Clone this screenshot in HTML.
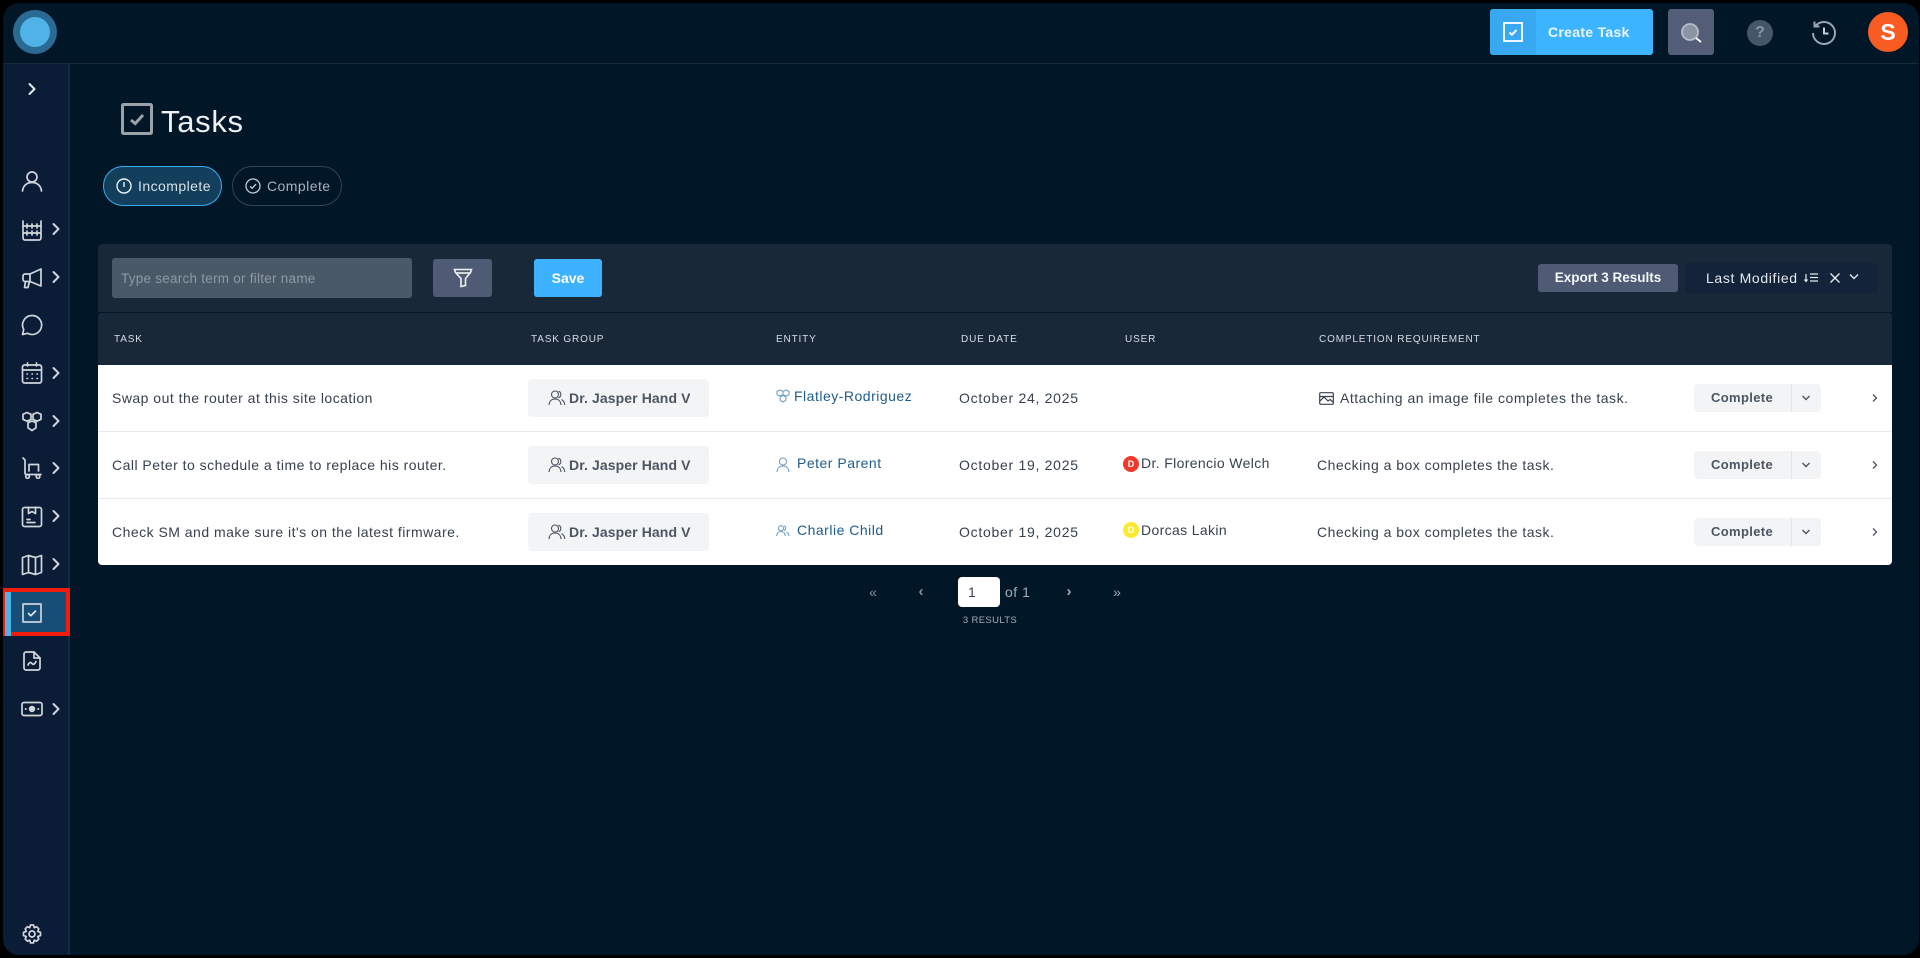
<!DOCTYPE html>
<html lang="en"><head><meta charset="utf-8"><title>Tasks</title>
<style>
*{box-sizing:border-box;margin:0;padding:0}
html,body{width:1920px;height:958px;background:#000;overflow:hidden;font-family:"Liberation Sans",sans-serif}
.a{position:absolute}
.t{position:absolute;white-space:nowrap;line-height:20px;height:20px}
#app{position:absolute;left:3px;top:3px;width:1916px;height:952px;border-radius:16px;background:#011627;overflow:hidden}
#root{position:absolute;left:-3px;top:-3px;width:1920px;height:958px}
.ic{position:absolute;fill:none;stroke:#d1d5db;stroke-width:1.7;stroke-linecap:round;stroke-linejoin:round}
.th{font-size:10px;letter-spacing:.85px;color:#d8dde3;top:330px}
.td{font-size:14px;color:#374151;letter-spacing:.48px}
.chip{position:absolute;left:528px;width:181px;height:38px;background:#f3f4f6;border-radius:4px}
.chipt{font-size:14px;font-weight:700;color:#4b5563;left:569px;letter-spacing:.1px}
.ln{font-size:14px;color:#1f5c8c;letter-spacing:.5px}
.cb{position:absolute;left:1694px;width:127px;height:28px;background:#f3f4f6;border-radius:4px}
.cbd{position:absolute;left:1791px;width:1px;height:28px;background:#e2e4e8}
.cbt{font-size:13px;font-weight:700;color:#4b5563;left:1711px;letter-spacing:.35px}
.rl{position:absolute;left:98px;width:1794px;height:1px;background:#e8eaed}
</style></head><body>
<div id="app"><div id="root">

<!-- sidebar -->
<div class="a" style="left:0;top:64px;width:68px;height:894px;background:#0a1c36"></div>
<div class="a" style="left:68px;top:64px;width:2px;height:894px;background:#13294a"></div>
<!-- header line -->
<div class="a" style="left:0;top:63px;width:1920px;height:1px;background:#122b3e"></div>

<!-- logo -->
<div class="a" style="left:13px;top:10px;width:44px;height:44px;border-radius:50%;background:#2a6a93"></div>
<div class="a" style="left:20px;top:17px;width:30px;height:30px;border-radius:50%;background:#4fb3e8"></div>

<!-- header right -->
<div class="a" style="left:1490px;top:9px;width:163px;height:46px;background:#3db4ff;border-radius:3px"></div>
<div class="a" style="left:1490px;top:9px;width:46px;height:46px;background:#38a8f0;border-radius:3px 0 0 3px"></div>
<svg class="a" style="left:1503px;top:22px" width="20" height="20" viewBox="0 0 20 20" fill="none" stroke="#fff"><rect x="1" y="1" width="18" height="18" stroke-width="1.8"/><path d="M6.5 10.5l2.4 2.2 4.6-4.6" stroke-width="2"/></svg>
<div class="t" style="left:1548px;top:22px;font-size:14px;font-weight:700;color:#eaf6ff;letter-spacing:.3px">Create Task</div>
<div class="a" style="left:1668px;top:9px;width:46px;height:46px;background:#535d78;border-radius:3px"></div>
<svg class="a" style="left:1680px;top:22px" width="24" height="22" viewBox="0 0 24 22" fill="none"><circle cx="10" cy="10" r="8" fill="#8b94a6" stroke="#b6bcc8" stroke-width="1.8"/><path d="M16 16l5 4" stroke="#fff" stroke-width="1.8"/></svg>
<div class="a" style="left:1747px;top:20px;width:26px;height:26px;border-radius:50%;background:#44566a"></div>
<div class="t" style="left:1747px;top:23px;width:26px;text-align:center;font-size:16px;font-weight:700;color:#8796a6">?</div>
<svg class="a" style="left:1810px;top:19px" width="28" height="28" viewBox="0 0 28 28" fill="none" stroke="#9aa5b1" stroke-width="2"><path d="M5.5 7A11 11 0 1 1 3 14"/><path d="M4.5 2.500v5h5"/><path d="M14 8.500v6h4.500" stroke="#c6ccd4"/></svg>
<div class="a" style="left:1868px;top:12px;width:40px;height:40px;border-radius:50%;background:#f95c22"></div>
<div class="t" style="left:1868px;top:22px;width:40px;text-align:center;font-size:23px;font-weight:700;color:#fff">S</div>

<!-- sidebar active -->
<div class="a" style="left:3px;top:588px;width:67px;height:48px;background:#164e78;border:4px solid #f01c0c"></div>
<div class="a" style="left:5px;top:592px;width:6px;height:44px;background:#4fb3e8"></div>

<!-- expand chevron -->
<svg class="ic" style="left:26px;top:82px" width="12" height="14" viewBox="0 0 12 14"><path d="M3.5 2l5 5-5 5" stroke="#e5e7eb" stroke-width="2"/></svg>
<!-- person -->
<svg class="ic" style="left:21px;top:170px" width="22" height="22" viewBox="0 0 22 22"><circle cx="11" cy="7" r="5"/><path d="M1.500 21c.5-5 4-8.500 9.500-8.500s9 3.500 9.500 8.500"/></svg>
<!-- abacus -->
<svg class="ic" style="left:21px;top:219px" width="22" height="22" viewBox="0 0 22 22"><path d="M2 2v17a2 2 0 0 0 2 2h14a2 2 0 0 0 2-2V2M2 7h18M2 14h18M6 5v4M11 5v4M16 5v4M6 12v4M11 12v4M16 12v4"/></svg>
<!-- megaphone -->
<svg class="ic" style="left:21px;top:267px" width="22" height="22" viewBox="0 0 22 22"><path d="M20 2v17l-11-4.500H4a2 2 0 0 1-2-2V9a2 2 0 0 1 2-2h5z"/><path d="M9 7v7.500M4.500 14.500l-1 6H7l1.500-6"/></svg>
<!-- chat -->
<svg class="ic" style="left:21px;top:314px" width="22" height="22" viewBox="0 0 22 22"><path d="M11 1.500a9.500 9.500 0 1 1-4.500 17.800L1.500 20.500l1.200-5A9.500 9.500 0 0 1 11 1.500z"/></svg>
<!-- calendar -->
<svg class="ic" style="left:21px;top:362px" width="22" height="22" viewBox="0 0 22 22"><rect x="1.500" y="3" width="19" height="18" rx="2"/><path d="M1.500 8h19M6.500 1v3M15.500 1v3"/><path d="M6 12h.5M11 12h.5M16 12h.5M6 16.500h.5M11 16.500h.5M16 16.500h.5" stroke-width="1.600"/></svg>
<!-- hexes -->
<svg class="ic" style="left:21px;top:410px" width="22" height="22" viewBox="0 0 22 22"><path d="M6 2.500l4 1.800v5L6 11.200 2 9.300v-5zM16 2.500l4 1.800v5l-4 1.900-4-1.900v-5zM11 11l4 1.800v5L11 20.500l-4-2.700v-5z"/></svg>
<!-- cart -->
<svg class="ic" style="left:21px;top:457px" width="22" height="22" viewBox="0 0 22 22"><path d="M2 1l2 2v13c0 1 .7 1.500 1.500 1.500H20"/><path d="M8 14V7.500h9.500V14"/><circle cx="6.500" cy="19.500" r="1.800"/><circle cx="17" cy="19.500" r="1.800"/></svg>
<!-- box -->
<svg class="ic" style="left:21px;top:506px" width="22" height="22" viewBox="0 0 22 22"><rect x="1.500" y="1.500" width="19" height="19" rx="2"/><path d="M7.500 1.500v6l3.500-2 3.500 2v-6M6 13.500h3M6 16.500h8"/></svg>
<!-- map -->
<svg class="ic" style="left:21px;top:554px" width="22" height="22" viewBox="0 0 22 22"><path d="M1.500 3.500l6-2 7 2 6-2v17l-6 2-7-2-6 2zM7.500 1.500v17M14.500 3.500v17"/></svg>
<!-- tasks -->
<svg class="ic" style="left:22px;top:603px" width="20" height="20" viewBox="0 0 20 20"><rect x="1" y="1" width="18" height="18" stroke="#cdd3da"/><path d="M6.500 10.500l2.400 2.200 4.600-4.600" stroke="#e5e7eb"/></svg>
<!-- report -->
<svg class="ic" style="left:22px;top:651px" width="20" height="20" viewBox="0 0 20 20"><path d="M2 3a2 2 0 0 1 2-2h8l6 6v10a2 2 0 0 1-2 2H4a2 2 0 0 1-2-2z"/><path d="M12 1v6h6M6 14c1.500-3 3-3 4-1.500s2.500 1 4-2"/></svg>
<!-- money -->
<svg class="ic" style="left:21px;top:701px" width="22" height="16" viewBox="0 0 22 16"><rect x="1" y="1.500" width="20" height="13" rx="2"/><circle cx="11" cy="8" r="2.400" fill="#d1d5db"/><path d="M4.500 8h.5M17 8h.5"/></svg>
<!-- gear -->
<svg class="ic" style="left:22px;top:924px" width="20" height="20" viewBox="0 0 20 20"><circle cx="10" cy="10" r="3"/><path d="M8.500 1h3l.7 2.700 2.400-1 2.200 2.200-1.100 2.500 2.800.9v3.300l-2.800.9 1.100 2.500-2.200 2.200-2.400-1-.7 2.700h-3l-.7-2.700-2.400 1-2.200-2.200 1.100-2.500L1.500 11.600V8.300l2.800-.9-1.100-2.500 2.200-2.200 2.400 1z"/></svg>
<!-- sidebar chevrons -->
<svg class="ic" style="left:50px;top:222px" width="12" height="14" viewBox="0 0 12 14"><path d="M3.500 2l5 5-5 5" stroke-width="2"/></svg>
<svg class="ic" style="left:50px;top:270px" width="12" height="14" viewBox="0 0 12 14"><path d="M3.500 2l5 5-5 5" stroke-width="2"/></svg>
<svg class="ic" style="left:50px;top:366px" width="12" height="14" viewBox="0 0 12 14"><path d="M3.500 2l5 5-5 5" stroke-width="2"/></svg>
<svg class="ic" style="left:50px;top:414px" width="12" height="14" viewBox="0 0 12 14"><path d="M3.500 2l5 5-5 5" stroke-width="2"/></svg>
<svg class="ic" style="left:50px;top:461px" width="12" height="14" viewBox="0 0 12 14"><path d="M3.500 2l5 5-5 5" stroke-width="2"/></svg>
<svg class="ic" style="left:50px;top:509px" width="12" height="14" viewBox="0 0 12 14"><path d="M3.500 2l5 5-5 5" stroke-width="2"/></svg>
<svg class="ic" style="left:50px;top:557px" width="12" height="14" viewBox="0 0 12 14"><path d="M3.500 2l5 5-5 5" stroke-width="2"/></svg>
<svg class="ic" style="left:50px;top:702px" width="12" height="14" viewBox="0 0 12 14"><path d="M3.500 2l5 5-5 5" stroke-width="2"/></svg>

<!-- title -->
<svg class="a" style="left:121px;top:103px" width="32" height="32" viewBox="0 0 32 32" fill="none"><rect x="1.500" y="1.500" width="29" height="29" rx="1" stroke="#9aa1a9" stroke-width="3"/><path d="M10 17l4.200 3.500L22 12" stroke="#9aa1a9" stroke-width="3"/></svg>
<div class="t" style="left:161px;top:102px;height:40px;line-height:40px;font-size:31px;color:#eef1f4;letter-spacing:.7px">Tasks</div>

<!-- pills -->
<div class="a" style="left:103px;top:166px;width:119px;height:40px;border-radius:20px;background:#133f5c;border:1px solid #38aef0"></div>
<svg class="a" style="left:116px;top:178px" width="16" height="16" viewBox="0 0 16 16" fill="none" stroke="#eef2f5" stroke-width="1.400"><circle cx="8" cy="8" r="7"/><path d="M8 4v5"/></svg>
<div class="t" style="left:138px;top:176px;font-size:14px;color:#d8e0e7;letter-spacing:.45px">Incomplete</div>
<div class="a" style="left:232px;top:166px;width:110px;height:40px;border-radius:20px;border:1px solid #36424f"></div>
<svg class="a" style="left:245px;top:178px" width="16" height="16" viewBox="0 0 16 16" fill="none" stroke="#c9ced4" stroke-width="1.300"><circle cx="8" cy="8" r="7"/><path d="M5 8.300l2.200 2L11 6"/></svg>
<div class="t" style="left:267px;top:176px;font-size:14px;color:#a9b1ba;letter-spacing:.45px">Complete</div>

<!-- toolbar -->
<div class="a" style="left:98px;top:244px;width:1794px;height:68px;background:#182838;border-radius:4px 4px 0 0"></div>
<div class="a" style="left:112px;top:258px;width:300px;height:40px;background:#4a5967;border-radius:3px"></div>
<div class="t" style="left:121px;top:269px;font-size:13.5px;color:#8e99a4;letter-spacing:.25px">Type search term or filter name</div>
<div class="a" style="left:433px;top:259px;width:59px;height:38px;background:#4f5a74;border-radius:3px"></div>
<svg class="a" style="left:453px;top:268px" width="20" height="20" viewBox="0 0 20 20" fill="none" stroke="#f1f3f5" stroke-width="1.600"><path d="M1.500 1.500h17l-1 3-5 6v7l-4.500 1v-8l-5.500-6z"/><path d="M3 5h14"/></svg>
<div class="a" style="left:534px;top:259px;width:68px;height:38px;background:#3db2ff;border-radius:3px"></div>
<div class="t" style="left:534px;top:268px;width:68px;text-align:center;font-size:14px;font-weight:700;color:#fff">Save</div>
<div class="a" style="left:1538px;top:264px;width:140px;height:28px;background:#4f5a74;border-radius:3px"></div>
<div class="t" style="left:1538px;top:268px;width:140px;text-align:center;font-size:13.5px;font-weight:700;color:#f3f5f7">Export 3 Results</div>
<div class="a" style="left:1685px;top:263px;width:193px;height:30px;background:#12233a;border-radius:3px"></div>
<div class="t" style="left:1706px;top:268px;font-size:14px;color:#e5e9ee;letter-spacing:.65px">Last Modified</div>
<svg class="a" style="left:1804px;top:272px" width="14" height="12" viewBox="0 0 14 12" fill="none" stroke="#e5e9ee" stroke-width="1.200"><path d="M2 2v7M.5 7.500L2 9.500l1.500-2M6 2h8M6 5.500h8M6 9h8"/></svg>
<svg class="a" style="left:1829px;top:272px" width="12" height="12" viewBox="0 0 12 12" fill="none" stroke="#e5e9ee" stroke-width="1.400"><path d="M1.500 1.500l9 9M10.500 1.500l-9 9"/></svg>
<svg class="a" style="left:1848px;top:272px" width="12" height="10" viewBox="0 0 12 10" fill="none" stroke="#e5e9ee" stroke-width="1.400"><path d="M2 2.500l4 4 4-4"/></svg>

<!-- table head -->
<div class="a" style="left:98px;top:313px;width:1794px;height:52px;background:#182838;border-radius:3px 3px 0 0"></div>
<div class="t th" style="left:114px">TASK</div>
<div class="t th" style="left:531px">TASK GROUP</div>
<div class="t th" style="left:776px">ENTITY</div>
<div class="t th" style="left:961px">DUE DATE</div>
<div class="t th" style="left:1125px">USER</div>
<div class="t th" style="left:1319px">COMPLETION REQUIREMENT</div>

<!-- rows -->
<div class="a" style="left:98px;top:365px;width:1794px;height:200px;background:#fff;border-radius:0 0 4px 4px"></div>
<div class="rl" style="top:431px"></div>
<div class="rl" style="top:498px"></div>

<div class="t td" style="left:112px;top:388px">Swap out the router at this site location</div>
<div class="t td" style="left:112px;top:455px">Call Peter to schedule a time to replace his router.</div>
<div class="t td" style="left:112px;top:522px">Check SM and make sure it's on the latest firmware.</div>

<div class="chip" style="top:379px"></div><div class="chip" style="top:446px"></div><div class="chip" style="top:513px"></div>
<svg class="a" style="left:548px;top:390px" width="18" height="16" viewBox="0 0 18 16" fill="none" stroke="#4b5563" stroke-width="1.100"><circle cx="7" cy="4.500" r="3.500"/><path d="M1 15c.3-4 2.700-6 6-6s5.700 2 6 6M10.500 1.200a3.500 3.500 0 0 1 0 6.600M13.500 9.500c1.800 1 3 2.800 3.300 5.500"/></svg>
<svg class="a" style="left:548px;top:457px" width="18" height="16" viewBox="0 0 18 16" fill="none" stroke="#4b5563" stroke-width="1.100"><circle cx="7" cy="4.500" r="3.500"/><path d="M1 15c.3-4 2.700-6 6-6s5.700 2 6 6M10.500 1.200a3.500 3.500 0 0 1 0 6.600M13.500 9.500c1.800 1 3 2.800 3.300 5.500"/></svg>
<svg class="a" style="left:548px;top:524px" width="18" height="16" viewBox="0 0 18 16" fill="none" stroke="#4b5563" stroke-width="1.100"><circle cx="7" cy="4.500" r="3.500"/><path d="M1 15c.3-4 2.700-6 6-6s5.700 2 6 6M10.500 1.200a3.500 3.500 0 0 1 0 6.600M13.500 9.500c1.800 1 3 2.800 3.300 5.500"/></svg>
<div class="t chipt" style="top:388px">Dr. Jasper Hand V</div>
<div class="t chipt" style="top:455px">Dr. Jasper Hand V</div>
<div class="t chipt" style="top:522px">Dr. Jasper Hand V</div>

<svg class="a" style="left:776px;top:389px" width="14" height="14" viewBox="0 0 14 14" fill="none" stroke="#6f9fc2" stroke-width="1.100"><path d="M4 1l3 1.400v3.200L4 7 1 5.600V2.400zM10 1l3 1.400v3.200L10 7 7 5.600V2.400zM7 6.500l2.800 1.300v3.500L7 13l-2.800-1.700V7.800z"/></svg>
<div class="t ln" style="left:794px;top:386px">Flatley-Rodriguez</div>
<svg class="a" style="left:776px;top:457px" width="14" height="16" viewBox="0 0 14 16" fill="none" stroke="#6f9fc2" stroke-width="1.100"><circle cx="7" cy="4.500" r="3.500"/><path d="M1 15c.3-4 2.700-6 6-6s5.700 2 6 6"/></svg>
<div class="t ln" style="left:797px;top:453px">Peter Parent</div>
<svg class="a" style="left:776px;top:525px" width="14" height="12" viewBox="0 0 14 12" fill="none" stroke="#6f9fc2" stroke-width="1.100"><circle cx="5" cy="3.300" r="2.600"/><path d="M.7 11c.2-3 2-4.500 4.300-4.500S9.100 8 9.300 11M8 .9a2.600 2.600 0 0 1 0 4.800M10.300 7c1.500.7 2.500 2 2.800 4"/></svg>
<div class="t ln" style="left:797px;top:520px">Charlie Child</div>

<div class="t td" style="left:959px;top:388px;letter-spacing:.72px">October 24, 2025</div>
<div class="t td" style="left:959px;top:455px;letter-spacing:.72px">October 19, 2025</div>
<div class="t td" style="left:959px;top:522px;letter-spacing:.72px">October 19, 2025</div>

<div class="a" style="left:1123px;top:456px;width:16px;height:16px;border-radius:50%;background:#f1392b"></div>
<div class="t" style="left:1123px;top:454px;width:16px;text-align:center;font-size:9px;font-weight:700;color:#fff">D</div>
<div class="t td" style="left:1141px;top:453px;letter-spacing:.36px">Dr. Florencio Welch</div>
<div class="a" style="left:1123px;top:522px;width:16px;height:16px;border-radius:50%;background:#fde92f"></div>
<div class="t" style="left:1123px;top:520px;width:16px;text-align:center;font-size:9px;font-weight:700;color:#fff">D</div>
<div class="t td" style="left:1141px;top:520px;letter-spacing:.36px">Dorcas Lakin</div>

<svg class="a" style="left:1319px;top:392px" width="15" height="13" viewBox="0 0 15 13" fill="none" stroke="#374151" stroke-width="1.200"><rect x=".7" y=".7" width="13.600" height="11.600" rx="1"/><path d="M1 9l4-4 4 4 2-1.500 3 2.500M1 4.500h13"/></svg>
<div class="t td" style="left:1340px;top:388px;letter-spacing:.52px">Attaching an image file completes the task.</div>
<div class="t td" style="left:1317px;top:455px">Checking a box completes the task.</div>
<div class="t td" style="left:1317px;top:522px">Checking a box completes the task.</div>

<div class="cb" style="top:384px"></div><div class="cbd" style="top:384px"></div>
<div class="cb" style="top:451px"></div><div class="cbd" style="top:451px"></div>
<div class="cb" style="top:518px"></div><div class="cbd" style="top:518px"></div>
<div class="t cbt" style="top:388px">Complete</div>
<div class="t cbt" style="top:455px">Complete</div>
<div class="t cbt" style="top:522px">Complete</div>
<svg class="a" style="left:1801px;top:394px" width="10" height="8" viewBox="0 0 10 8" fill="none" stroke="#4b5563" stroke-width="1.400"><path d="M1.500 2l3.500 3.500L8.500 2"/></svg>
<svg class="a" style="left:1801px;top:461px" width="10" height="8" viewBox="0 0 10 8" fill="none" stroke="#4b5563" stroke-width="1.400"><path d="M1.500 2l3.500 3.500L8.500 2"/></svg>
<svg class="a" style="left:1801px;top:528px" width="10" height="8" viewBox="0 0 10 8" fill="none" stroke="#4b5563" stroke-width="1.400"><path d="M1.500 2l3.500 3.500L8.500 2"/></svg>
<svg class="a" style="left:1871px;top:393px" width="8" height="10" viewBox="0 0 8 10" fill="none" stroke="#4b5563" stroke-width="1.300"><path d="M2 1.500L5.500 5 2 8.500"/></svg>
<svg class="a" style="left:1871px;top:460px" width="8" height="10" viewBox="0 0 8 10" fill="none" stroke="#4b5563" stroke-width="1.300"><path d="M2 1.500L5.500 5 2 8.500"/></svg>
<svg class="a" style="left:1871px;top:527px" width="8" height="10" viewBox="0 0 8 10" fill="none" stroke="#4b5563" stroke-width="1.300"><path d="M2 1.500L5.500 5 2 8.500"/></svg>

<!-- pagination -->
<div class="t" style="left:863px;top:582px;width:20px;text-align:center;font-size:14px;color:#8a95a1">«</div>
<div class="t" style="left:911px;top:582px;width:20px;text-align:center;font-size:15px;font-weight:700;color:#8a95a1">‹</div>
<div class="a" style="left:958px;top:577px;width:42px;height:30px;background:#fff;border-radius:4px"></div>
<div class="t" style="left:968px;top:582px;font-size:14px;color:#374151">1</div>
<div class="t" style="left:1005px;top:582px;font-size:14px;color:#a3acb6;letter-spacing:.5px">of 1</div>
<div class="t" style="left:1059px;top:582px;width:20px;text-align:center;font-size:15px;font-weight:700;color:#a3acb6">›</div>
<div class="t" style="left:1107px;top:582px;width:20px;text-align:center;font-size:14px;color:#a3acb6">»</div>
<div class="t" style="left:940px;top:611px;width:100px;text-align:center;font-size:9.5px;color:#a3acb6;letter-spacing:.35px">3 RESULTS</div>

</div></div>
</body></html>
